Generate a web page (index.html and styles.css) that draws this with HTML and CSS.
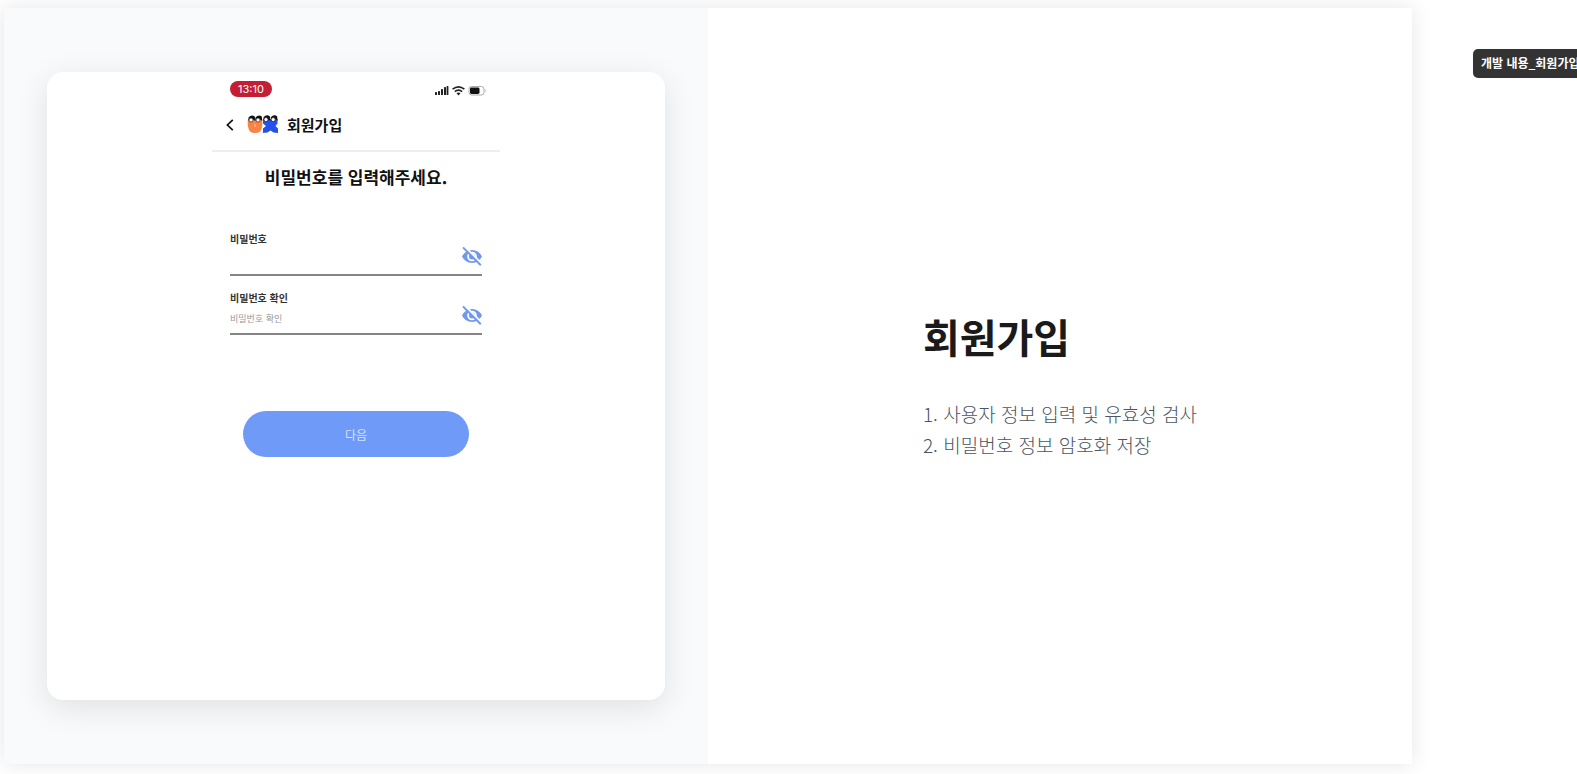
FILE: index.html
```html
<!DOCTYPE html>
<html lang="ko">
<head>
    <meta charset="UTF-8">
    <meta name="viewport" content="width=device-width, initial-scale=1.0">
    <title>개발 내용_회원가입</title>
    <link rel="stylesheet" href="styles.css">
</head>
<body>
    <main class="slide">
        <section class="preview">
            <div class="card">
                <div class="phone">
                    <div class="status-bar">
                        <span class="time">13:10</span>
                        <svg class="status-icons" width="52" height="12" viewBox="0 0 52 12" aria-hidden="true">
                            <g fill="#222">
                                <rect x="0" y="7" width="2" height="3" rx="0.5"/>
                                <rect x="3" y="6" width="2" height="4" rx="0.5"/>
                                <rect x="6" y="4" width="2" height="6" rx="0.5"/>
                                <rect x="9" y="2" width="2" height="8" rx="0.5"/>
                                <rect x="11.6" y="1" width="1.8" height="9" rx="0.5"/>
                            </g>
                            <g fill="none" stroke="#222" stroke-width="1.6">
                                <path d="M17.6 4.2q5.900-4.800 11.800 0"/>
                                <path d="M19.8 6.600q3.700-2.900 7.400 0"/>
                            </g>
                            <path d="M21.500 8.300q2-1.400 4 0l-2 2.100z" fill="#222"/>
                            <rect x="34" y="1.5" width="15" height="8.5" rx="2.6" fill="#fff" stroke="#aaa"/>
                            <rect x="35" y="2.5" width="9.5" height="6.5" rx="1.4" fill="#111"/>
                            <path d="M50.400 4v3.600q1.400-1.800 0-3.600" fill="#aaa"/>
                        </svg>
                    </div>
                    <header class="app-bar">
                        <button class="back" type="button" aria-label="뒤로">
                            <svg width="8" height="12" viewBox="0 0 8 12"><path d="M6.800 .8 1.400 6l5.400 5.200" fill="none" stroke="#111" stroke-width="1.7"/></svg>
                        </button>
                        <svg class="mascots" width="32" height="19" viewBox="0 0 32 19" aria-hidden="true">
                            <path d="M1 4q7-2 14 0 .8 5-.3 9.500-1.200 4.500-6.700 4.500t-6.500-4.500Q.2 9 1 4z" fill="#fb8344"/>
                            <path d="M8 9v3" stroke="#ffc7a5" stroke-width="1"/>
                            <path d="M16 4h14.500v4.500l-2 2.500 2.500 2.500V18l-4.500-.5-3-2-3 2-4.500.5v-4.500l3-2.500-3-2.500z" fill="#2450ee"/>
                            <g fill="#111">
                                <path d="M1.500 2.500q3-3.500 6.300-1l.5 4.500q-3-3-6.800-.5z"/>
                                <path d="M8.500 2.500q3-3.500 6.300-1l.5 4.500q-3-3-6.800-.5z"/>
                                <path d="M16.500 2.200q3-3.500 6.300-1l.5 4.500q-3-3-6.800-.5z"/>
                                <path d="M23.800 2.200q3-3.500 6.300-1l.5 4.500q-3-3-6.800-.5z"/>
                            </g>
                            <g fill="#fff" stroke="#111" stroke-width="0.6">
                                <circle cx="4" cy="5" r="2"/>
                                <circle cx="11" cy="5" r="2"/>
                                <circle cx="19" cy="4.600" r="2"/>
                                <circle cx="26.200" cy="4.600" r="2"/>
                            </g>
                        </svg>
                        <h2>회원가입</h2>
                    </header>
                    <form class="signup">
                        <h3>비밀번호를 입력해주세요.</h3>
                        <div class="field">
                            <label for="password">비밀번호</label>
                            <div class="input-row">
                                <input type="password" id="password">
                                <button class="eye" type="button" aria-label="비밀번호 표시">
                                    <svg width="20" height="20" viewBox="0 0 20 20"><use href="#eye-off"/></svg>
                                </button>
                            </div>
                        </div>
                        <div class="field">
                            <label for="password-check">비밀번호 확인</label>
                            <div class="input-row">
                                <input type="password" id="password-check" placeholder="비밀번호 확인">
                                <button class="eye" type="button" aria-label="비밀번호 확인 표시">
                                    <svg width="20" height="20" viewBox="0 0 20 20">
                                        <g id="eye-off">
                                            <path d="M0 10.500Q3.200 4 10 4t10 6.500Q16.800 17 10 17T0 10.500z" fill="#7199ea"/>
                                            <circle cx="10" cy="10.500" r="3.900" fill="#7199ea" stroke="#fff" stroke-width="1.800"/>
                                            <path d="M2.600.6l18 18" stroke="#fff" stroke-width="2"/>
                                            <path d="M1 1.400l17.800 17.800" stroke="#7199ea" stroke-width="2"/>
                                        </g>
                                    </svg>
                                </button>
                            </div>
                        </div>
                        <button class="next" type="button">다음</button>
                    </form>
                </div>
            </div>
        </section>
        <section class="content">
            <div class="description">
                <h1>회원가입</h1>
                <p>1. 사용자 정보 입력 및 유효성 검사<br>2. 비밀번호 정보 암호화 저장</p>
            </div>
        </section>
    </main>
    <div class="page-tag">개발 내용_회원가입</div>
</body>
</html>
```
FILE: styles.css
```css
* {
    box-sizing: border-box;
}
body {
    margin: 0;
    padding: 8px 165px 10px 4px;
    min-height: 100vh;
    display: flex;
    background: #fff;
    font-family: "Noto Sans CJK KR", sans-serif;
    overflow: hidden;
}
h1, h2, h3, p {
    margin: 0;
}
button {
    font-family: inherit;
    border: none;
    padding: 0;
    background: none;
    cursor: pointer;
}
.slide {
    flex: 1;
    display: flex;
    background: #fff;
    box-shadow: 0 0 20px rgba(0, 0, 0, 0.1);
}
.preview {
    width: 50%;
    display: flex;
    padding: 64px 43px;
    background: #f8fafc;
}
.card {
    flex: 1;
    border-radius: 16px;
    background: #fff;
    box-shadow: 0 8px 32px rgba(0, 0, 0, 0.1);
}
.phone {
    width: 288px;
    margin: 0 auto;
}
.status-bar {
    display: flex;
    justify-content: space-between;
    align-items: center;
    padding: 8px 13px 0 18px;
}
.time {
    width: 42px;
    border-radius: 8px;
    background: #c41e34;
    color: #fff;
    font-family: Inter, sans-serif;
    font-size: 11px;
    line-height: 16px;
    text-align: center;
}
.status-icons {
    margin-top: 5px;
}
.app-bar {
    display: flex;
    align-items: center;
    height: 55px;
    padding: 2px 14px 0;
    border-bottom: 2px solid #eee;
}
.back {
    display: flex;
}
.mascots {
    margin: 0 8px 0 13px;
}
.app-bar h2 {
    font-size: 15px;
    font-weight: 700;
    color: #111;
}
.signup {
    display: flex;
    flex-direction: column;
    padding: 12px 18px 0;
}
.signup h3 {
    margin-bottom: 42px;
    font-size: 17px;
    font-weight: 700;
    line-height: 26px;
    text-align: center;
    color: #111;
}
.field {
    height: 44px;
    margin-bottom: 15px;
    border-bottom: 2px solid #858585;
}
.field label {
    display: block;
    font-size: 10px;
    font-weight: 700;
    line-height: 13px;
    color: #333;
}
.input-row {
    display: flex;
    align-items: flex-start;
}
.input-row input {
    flex: 1;
    min-width: 0;
    height: 28px;
    padding: 0;
    border: none;
    outline: none;
    background: none;
    font-family: inherit;
    font-size: 9px;
}
.input-row input::placeholder {
    color: #999;
}
.eye {
    display: flex;
    padding-top: 1px;
}
.next {
    height: 46px;
    margin: 61px 13px 0;
    border-radius: 23px;
    background: #6f9af8;
    color: #d5e2ff;
    font-size: 12px;
}
.content {
    width: 50%;
    display: flex;
    align-items: center;
    justify-content: center;
}
.description h1 {
    margin-bottom: 38px;
    font-size: 40px;
    font-weight: 700;
    line-height: 48px;
    color: #1a1a1a;
}
.description p {
    font-size: 19px;
    font-weight: 300;
    line-height: 31px;
    color: #4b5563;
}
.page-tag {
    position: absolute;
    top: 49px;
    left: calc(100% - 104px);
    padding: 3px 8px 5px;
    border-radius: 5px;
    background: #333;
    color: #fff;
    font-size: 12px;
    font-weight: 700;
    line-height: 21px;
    white-space: nowrap;
}
```
